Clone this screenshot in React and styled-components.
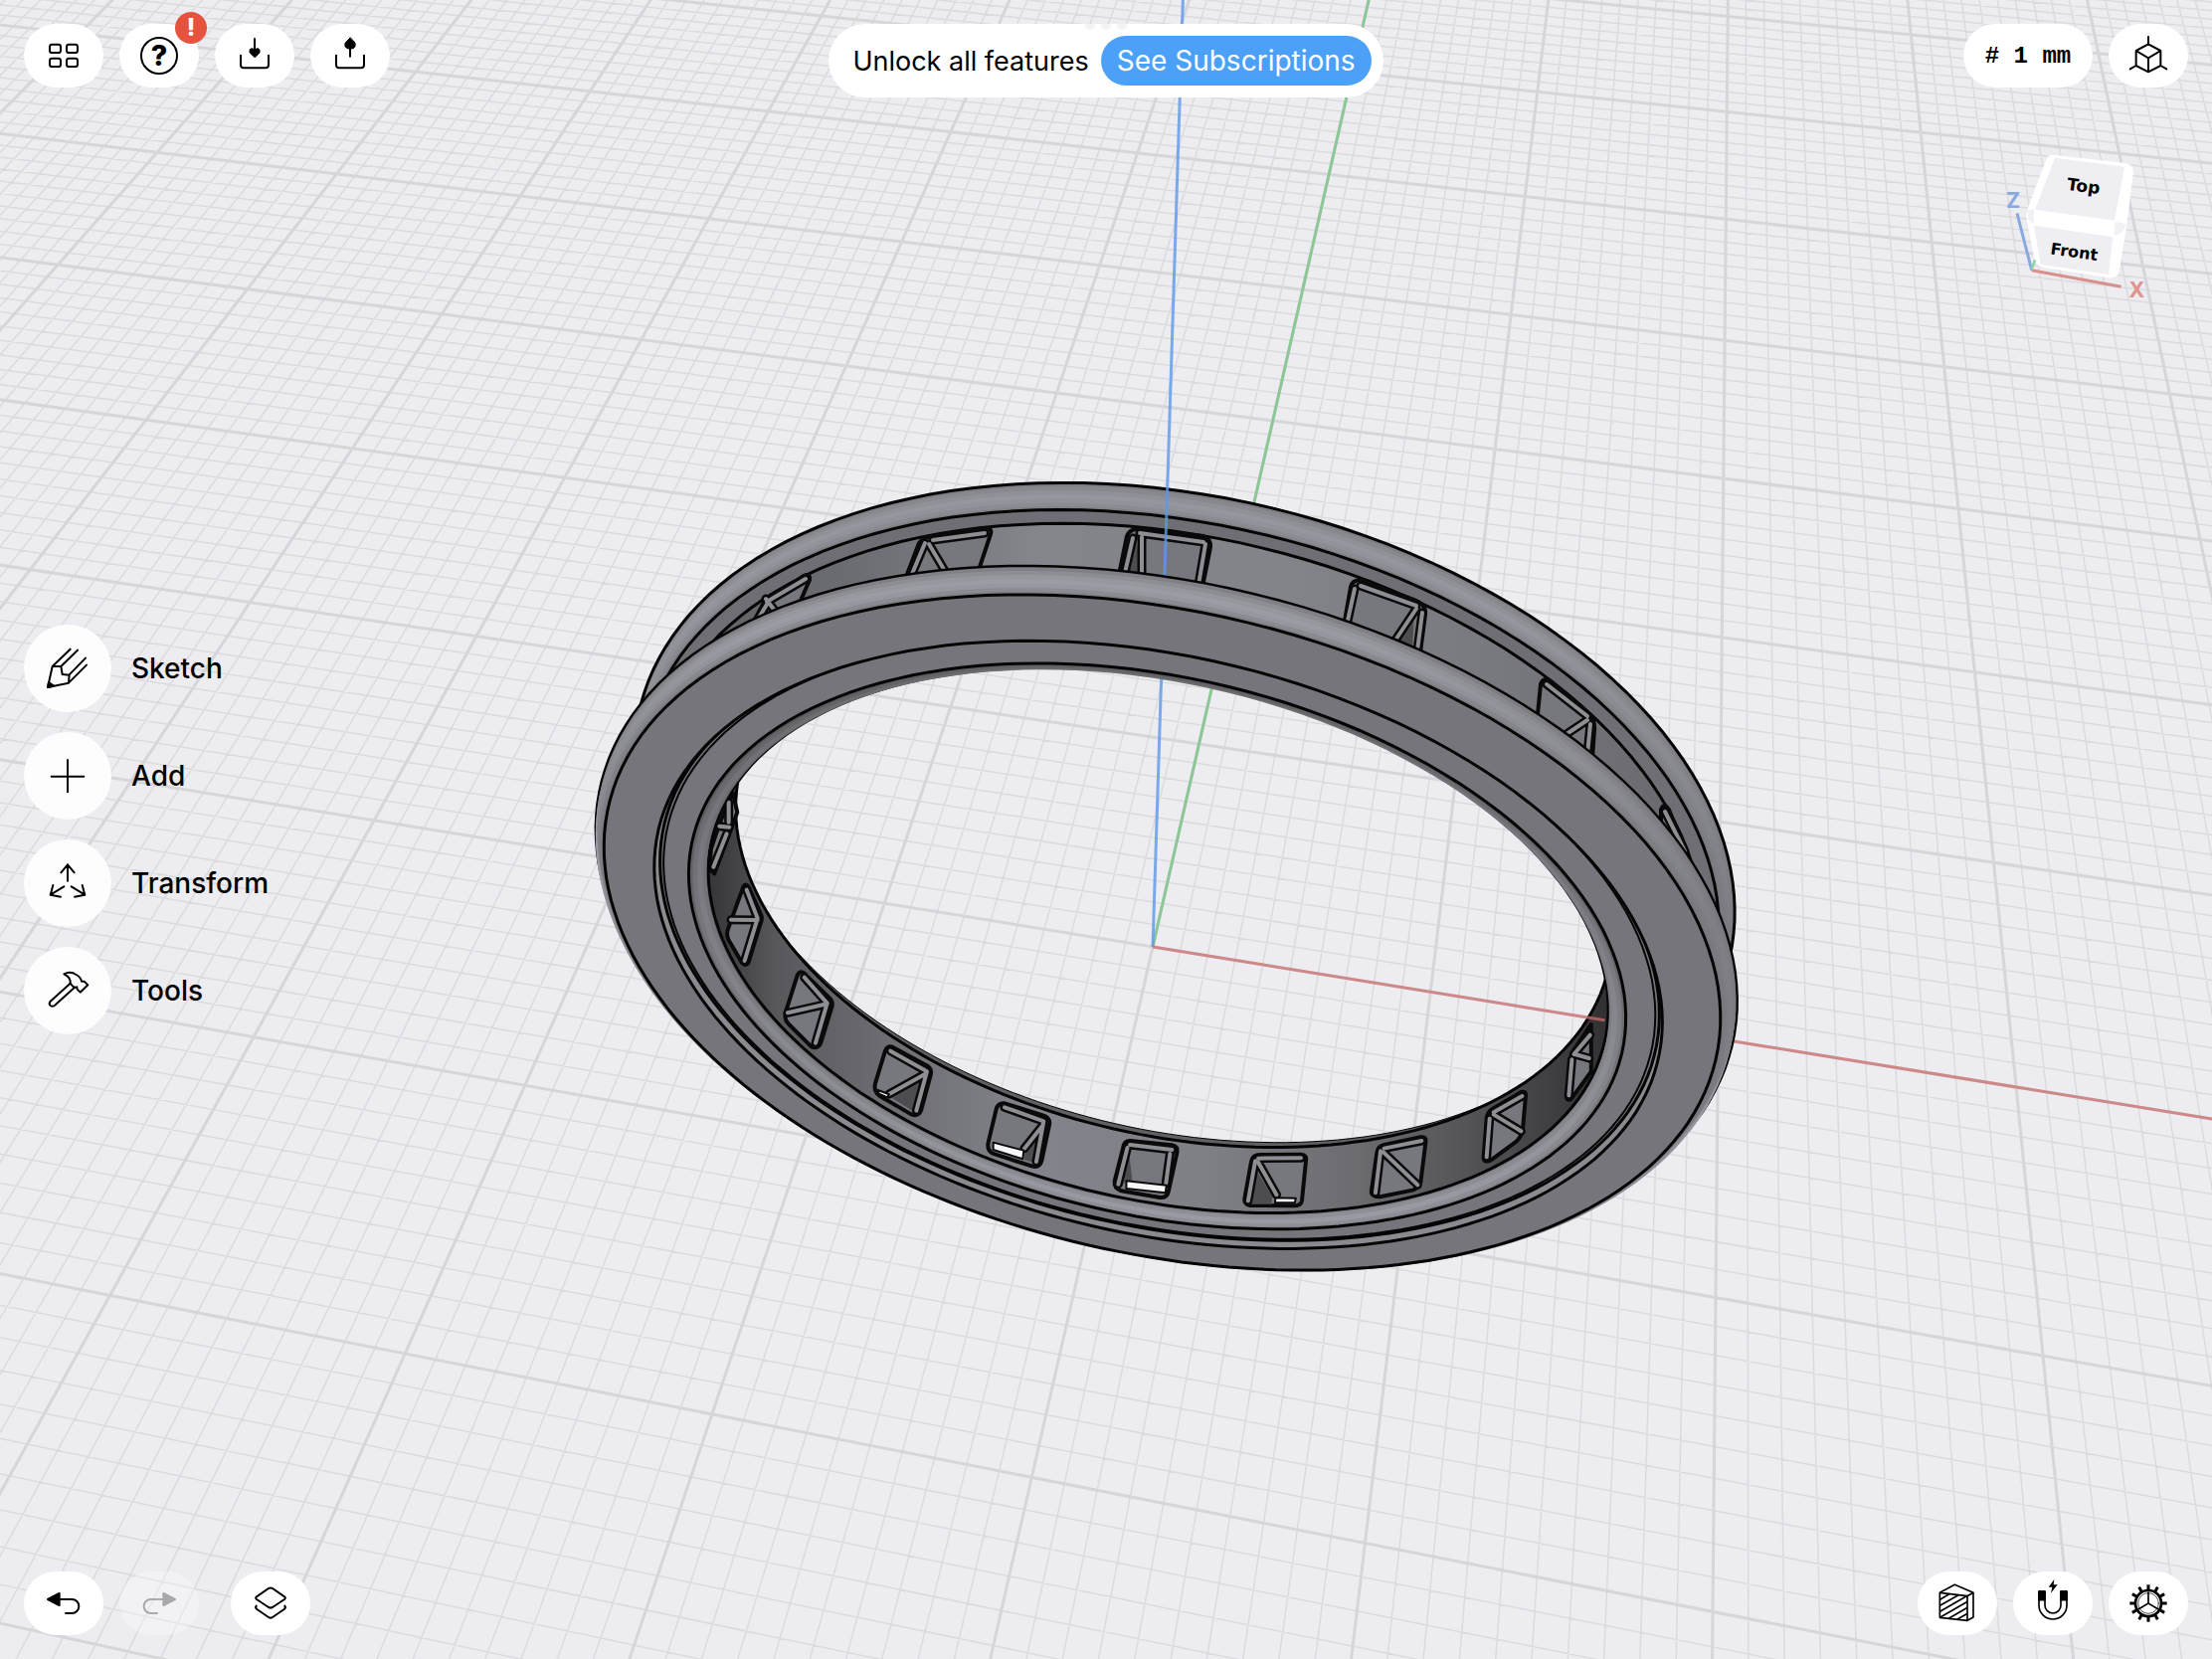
import React, { Component } from 'react';
import styled, { createGlobalStyle } from 'styled-components';

const GlobalStyle = createGlobalStyle`
  * {
    box-sizing: border-box;
  }

  body {
    margin: 0;
    background: #ECECF1;
    font-family: Inter, "Liberation Sans", sans-serif;
    color: #000;
  }

  button {
    border: 0;
    padding: 0;
    background: none;
    color: inherit;
    font: inherit;
    cursor: pointer;
  }
`;

const Page = styled.div`
  position: relative;
  display: flex;
  flex-direction: column;
  min-height: 100vh;
  overflow: hidden;
`;

const Viewport = styled.svg`
  position: absolute;
  inset: 0;
  width: 100%;
  height: 100%;
`;

const Bar = styled.div`
  position: relative;
  display: grid;
  grid-template-columns: 1fr auto 1fr;
  align-items: ${props => props.$align};
  min-height: 98px;
  padding: ${props => (props.$align === 'start' ? '24px 24px 0' : '0 24px 24px')};
`;

const BarGroup = styled.div`
  display: flex;
  gap: 16px;
  grid-column: ${props => (props.$right ? 3 : 1)};
  justify-content: ${props => (props.$right ? 'flex-end' : 'flex-start')};
`;

const Pill = styled.button`
  position: relative;
  display: flex;
  align-items: center;
  justify-content: center;
  width: 80px;
  height: 64px;
  border-radius: 32px;
  background: #FFF;

  &:disabled {
    background: rgba(255, 255, 255, 0.3);
    color: #A9A9AB;
    cursor: default;
  }
`;

const LayersPill = styled(Pill)`
  margin-left: 16px;
`;

const UnitPill = styled(Pill)`
  width: 130px;
  font-family: "Liberation Mono", monospace;
  font-size: 24px;
  font-weight: bold;
`;

const Badge = styled.span`
  position: absolute;
  top: -12px;
  right: -8px;
  width: 32px;
  height: 32px;
  border-radius: 50%;
  background: #E5533F;
  color: #FFF;
  font-size: 24px;
  font-weight: 800;
  line-height: 32px;
  text-align: center;
`;

const Banner = styled.div`
  position: relative;
  display: flex;
  align-items: center;
  grid-column: 2;
  gap: 12px;
  height: 74px;
  padding: 0 12px 0 24px;
  border-radius: 37px;
  background: #FFF;
  overflow: hidden;
  font-size: 27px;
  white-space: nowrap;
`;

const BannerDots = styled.span`
  position: absolute;
  top: -4px;
  left: 50%;
  display: flex;
  gap: 6px;
  transform: translateX(-50%);

  i {
    width: 10px;
    height: 10px;
    border-radius: 50%;
    background: #F2F2F4;
  }
`;

const SubscribeButton = styled.button`
  height: 50px;
  padding: 0 16px;
  border-radius: 25px;
  background: #4AA1F7;
  color: #FFF;
  font-size: 28px;
`;

const Main = styled.main`
  position: relative;
  display: flex;
  flex: 1;
  justify-content: space-between;
  padding: 0 56px 0 24px;
`;

const ToolList = styled.nav`
  display: flex;
  flex-direction: column;
  align-self: center;
  gap: 20px;
`;

const ToolButton = styled.button`
  display: flex;
  align-items: center;
  gap: 20px;
  font-size: 28px;
  font-weight: 500;
`;

const ToolCircle = styled.span`
  display: flex;
  align-items: center;
  justify-content: center;
  width: 88px;
  height: 88px;
  border-radius: 50%;
  background: #FDFDFE;
`;

const IconSvg = styled.svg`
  width: 40px;
  height: 40px;
  overflow: visible;
  fill: none;
  stroke: currentColor;
  stroke-width: ${props => (props.$thin ? 5 : 6)};
  stroke-linecap: round;
  stroke-linejoin: round;

  .solid {
    fill: currentColor;
  }
`;

const OrientationCube = styled.svg`
  width: 160px;
  height: 160px;
  margin-top: 50px;
`;

const Icon = ({ thin, children }) => (
  <IconSvg viewBox="-60 -60 120 120" $thin={thin} aria-hidden="true">{children}</IconSvg>
);

const GridIcon = () => (
  <Icon>
    <rect x="-42" y="-34" width="33" height="25" rx="7" />
    <rect x="9" y="-34" width="33" height="25" rx="7" />
    <rect x="-42" y="8" width="33" height="25" rx="7" />
    <rect x="9" y="8" width="33" height="25" rx="7" />
  </Icon>
);

const HelpIcon = () => (
  <Icon>
    <circle r="54" />
    <text y="31" textAnchor="middle" fontSize="86" fontWeight="800" fill="currentColor" stroke="none">?</text>
  </Icon>
);

const ImportIcon = () => (
  <Icon>
    <path d="M-42,-1 V28 Q-42,37 -33,37 H33 Q42,37 42,28 V-1 M0,-51 V-15" />
    <path className="solid" d="M0,5 L-15,-10 Q-17,-22 -8,-22 L0,-18 L8,-22 Q17,-22 15,-10 Z" strokeWidth="3" />
  </Icon>
);

const ExportIcon = () => (
  <Icon>
    <path d="M-42,-1 V28 Q-42,37 -33,37 H33 Q42,37 42,28 V-1 M0,2 V-30" />
    <path className="solid" d="M0,-54 L-15,-38 Q-18,-26 -9,-22 Q-4,-20 0,-24 Q4,-20 9,-22 Q18,-26 15,-38 Z" strokeWidth="3" />
  </Icon>
);

const ViewIcon = () => (
  <Icon>
    <path d="M0,-35 L37,-15 V30 L0,49 L-37,30 V-15 Z M-37,-15 L0,7 L37,-15 M0,7 V49 M0,-35 V-57 M-37,30 L-55,40 M37,30 L55,40" />
  </Icon>
);

const SketchIcon = () => (
  <Icon>
    <path d="M8,-58 L-46,-6 L-60,57 L3,44 L57,-10 M30,-55 L-20,-6 L-16,18 L5,20 L3,44 M54,-31 L5,19 M-46,-6 H-20" />
    <path className="solid" d="M-60,57 L-57,42 L-42,53 Z" />
  </Icon>
);

const AddIcon = () => <Icon><path d="M-49,2 H49 M0,-48 V49" /></Icon>;

const TransformIcon = () => (
  <Icon>
    <path d="M0,-7 V-56 M-20,-32 L0,-56 L20,-32 M-11,10 L-52,35 M-44,6 L-52,35 L-21,41 M11,10 L52,35 M44,6 L52,35 L21,41" />
  </Icon>
);

const ToolsIcon = () => (
  <Icon>
    <path d="M8,-22 L-52,32 Q-58,40 -52,45 Q-44,50 -37,43 L21,-10" />
    <path d="M-11,-50 Q8,-60 26,-48 Q40,-40 42,-28 L50,-28 L61,-17 L38,5 L29,-4 L28,-11 Q20,-8 15,-14 L8,-22 Q10,-40 -11,-50 Z" />
  </Icon>
);

const UndoIcon = () => (
  <Icon>
    <path d="M-10,-12 H25 A21,21 0 0 1 25,30 H6" />
    <path className="solid" d="M-48,-12 L-13,-30 V6 Z" />
  </Icon>
);

const RedoIcon = () => (
  <Icon>
    <path d="M10,-12 H-25 A21,21 0 0 0 -25,30 H-6" />
    <path className="solid" d="M48,-12 L13,-30 V6 Z" />
  </Icon>
);

const LayersIcon = () => (
  <Icon>
    <path d="M-6,-45 Q0,-48 6,-45 L42,-20 Q47,-16 42,-12 L6,12 Q0,15 -6,12 L-42,-12 Q-47,-16 -42,-20 Z" />
    <path d="M-43,8 Q-47,14 -41,18 L-6,42 Q0,46 6,42 L41,18 Q47,14 43,8" />
  </Icon>
);

const SectionIcon = () => (
  <Icon thin>
    <path d="M-53,-32 L30,-22 V52 L-53,43 Z M-53,-32 L-8,-56 L48,-32 L30,-22 M48,-32 V42 L30,52" />
    <path d="M-51,-12 L-25,-28 M-51,6 L3,-25 M-51,24 L28,-22 M-50,41 L28,-4 M-25,45 L28,14 M0,48 L28,32" />
  </Icon>
);

const MagnetIcon = () => (
  <Icon thin>
    <path d="M-42,-36 V6 A42,42 0 0 0 42,6 V-36 H24 V6 A24,24 0 0 1 -24,6 V-36 Z" />
    <path className="solid" d="M-42,-36 H-24 V-10 H-42 Z M42,-36 H24 V-10 H42 Z" />
    <path className="solid" d="M4,-72 L-13,-49 L-2,-49 L-6,-31 L14,-56 L2,-56 Z" stroke="none" />
  </Icon>
);

const GearIcon = () => (
  <Icon thin>
    <circle r="39" strokeWidth="8" />
    <circle r="31" strokeWidth="2" />
    <path d="M0,-33 V0 L-29,17 M0,0 L29,17" />
    {Array.from({ length: 12 }, (_, i) => (
      <path key={i} d="M0,-42 V-56" strokeWidth="9" strokeLinecap="butt" transform={`rotate(${i * 30})`} />
    ))}
  </Icon>
);

// Camera: one grid unit is 10 mm, columns are the x, y and z axes plus the origin.
const project = (x, y, z) => {
  const depth = 1 - 0.0172 * x + 0.085 * y - 0.1073 * z;
  return [
    (1159 + 254.5 * x + 149 * y - 119.2 * z) / depth,
    (952 + 28.2 * x - 140.4 * y - 264.1 * z) / depth,
  ];
};

const point = ([x, y]) => `${x.toFixed(1)},${y.toFixed(1)}`;

const segment = (a, b) => `M${point(project(...a))} L${point(project(...b))}`;

const gridLines = (major) => {
  const lines = [];
  for (let i = -120; i <= 100; i += 1) {
    if ((i % 10 === 0) === major) {
      if (i <= 80) lines.push(segment([i / 10, -4, 0], [i / 10, 10, 0]));
      if (i >= -40) lines.push(segment([-12, i / 10, 0], [8, i / 10, 0]));
    }
  }
  return lines.join(' ');
};

// Circle around the y axis with radius r, at distance y from the origin.
const circle = (r, y) => {
  const points = [];
  for (let i = 0; i < 180; i += 1) {
    const angle = (i * Math.PI) / 90;
    points.push(point(project(r * Math.cos(angle), y, r * Math.sin(angle))));
  }
  return `M${points.join(' L')} Z`;
};

const EVERYTHING = 'M0,0 H2224 V1668 H0 Z';
const BORE = circle(1.6, -0.165);
const FACE = circle(1.957, -0.232);

const fillet = (from, to, shades) => shades.map((shade, i) => {
  const angle = (i / shades.length) * (Math.PI / 2);
  return {
    shade,
    r: to[0] + (from[0] - to[0]) * Math.cos(angle),
    y: from[1] + (to[1] - from[1]) * Math.sin(angle),
  };
});

const BACK_RIM = fillet([2, 0.2], [1.95, 0.138], ['#7E7E84', '#88898F', '#909197', '#96979E', '#92939A', '#8B8C92', '#808187']);
const FRONT_RIM = fillet([2.005, -0.17], [1.957, -0.232], ['#808086', '#8D8E94', '#97989E', '#9C9DA4', '#97989F', '#8B8C92', '#7F8086']);
const INNER_RIM = [
  { r: 1.603, y: -0.177, shade: 'url(#innerMid)' },
  { r: 1.612, y: -0.188, shade: 'url(#innerLight)' },
  { r: 1.63, y: -0.198, shade: 'url(#innerMid)' },
  { r: 1.645, y: -0.203, shade: 'url(#innerDark)' },
];

const LEFT_POCKETS = [
  {
    outline: 'M470,110 L484,170 L468,213 L415,355 L400,342 L405,280 L430,205 Z',
    beams: 'M458,140 V200 M430,212 L460,215 M452,235 L412,335',
  },
  {
    outline: 'M502,395 Q510,382 518,396 L556,480 Q560,492 555,502 L517,625 Q508,636 498,624 L458,556 Q450,540 456,522 Z',
    beams: 'M512,404 L545,490 L506,618 M465,494 L545,495',
  },
  {
    outline: 'M665,662 Q672,646 686,656 L762,730 Q774,742 769,758 L735,868 Q728,884 708,878 L640,810 Q624,796 630,772 Z',
    beams: 'M686,668 L755,746 L720,866 M636,775 L755,748',
  },
  {
    outline: 'M930,890 Q936,872 952,878 L1052,932 Q1073,942 1067,964 L1038,1070 Q1031,1088 1010,1082 L914,1026 Q894,1012 900,988 Z',
    dark: 'M1048,972 L1018,1074 L950,1032 Z',
    light: 'M908,1008 L942,1021 L936,1030 L910,1018 Z',
    beams: 'M946,890 L1056,952 L1024,1070 M942,1020 L1054,958',
  },
  {
    outline: 'M1265,1066 Q1270,1046 1290,1048 L1406,1084 Q1430,1092 1425,1114 L1402,1222 Q1396,1243 1374,1238 L1256,1200 Q1236,1190 1241,1166 Z',
    dark: 'M1400,1130 L1378,1226 L1350,1218 L1352,1190 Z',
    light: 'M1256,1166 L1348,1190 L1345,1216 L1256,1188 Z',
    beams: 'M1290,1060 L1408,1102 L1386,1224 M1350,1184 L1406,1114',
  },
];

const RIGHT_POCKETS = [
  {
    outline: 'M332,460 Q334,440 346,441 L428,454 Q440,458 438,476 L421,594 Q418,614 404,612 L328,592 Q313,584 315,562 Z',
    dark: 'M343,476 L350,560 L338,562 L324,584 Z',
    light: 'M338,562 L417,575 L415,598 L338,585 Z',
    beams: 'M345,453 L428,468 M340,462 L322,572 M424,480 L416,570',
  },
  {
    outline: 'M584,505 Q586,484 600,483 L682,482 Q694,484 692,500 L684,622 Q682,637 668,637 L582,636 Q570,632 571,616 Z',
    dark: 'M592,524 L626,610 L624,632 L584,632 Z',
    light: 'M632,613 L672,614 L670,628 L631,628 Z',
    beams: 'M598,494 L682,493 M592,502 L578,622 M598,506 L634,604',
  },
  {
    outline: 'M832,476 Q834,458 845,454 L918,430 Q930,428 928,444 L918,566 Q914,584 902,590 L838,610 Q820,610 821,592 Z',
    beams: 'M846,464 L920,441 M839,472 L829,598 M845,476 L912,574',
  },
  {
    outline: 'M1048,372 Q1050,352 1060,344 L1116,294 Q1126,290 1125,304 L1119,410 Q1116,430 1106,444 L1056,500 Q1042,508 1042,492 Z',
    beams: 'M1062,355 L1118,306 M1054,374 L1048,490 M1062,362 L1116,412',
  },
  {
    outline: 'M1215,178 L1254,90 L1254,232 L1214,316 Q1205,322 1205,306 Z',
    beams: 'M1220,180 L1252,122 M1216,196 L1210,304 M1222,180 L1250,192',
  },
];

const OUTER_POCKETS = [
  { outline: 'M754,632 L768,606 L808,579 Q815,576 814,583 L804,606', beams: 'M771,605 L810,582 M772,606 L760,626 M770,602 L782,618' },
  { outline: 'M911,580 L924,546 Q928,540 938,539 L990,531 Q998,531 996,537 L984,573', beams: 'M938,543 L990,536 M930,546 L917,577 M934,547 L950,574' },
  { outline: 'M1125,578 L1133,539 Q1136,531 1146,532 L1210,539 Q1218,542 1217,550 L1209,590', dark: 'M1142,542 L1148,578 L1134,578 Z', beams: 'M1146,536 L1210,545 M1139,541 L1131,576 M1148,540 V578 M1212,547 L1205,588' },
  { outline: 'M1352,624 L1358,590 Q1360,582 1370,584 L1424,604 Q1434,608 1433,618 L1428,656', dark: 'M1422,614 L1420,654 L1406,646 Z', beams: 'M1368,589 L1424,609 M1362,592 L1355,624 M1424,612 L1404,642 M1430,616 L1425,654' },
  { outline: 'M1546,718 L1549,688 Q1551,681 1558,684 L1596,716 Q1604,722 1603,734 L1601,762', beams: 'M1555,688 L1596,720 M1596,724 L1572,740 M1599,728 L1596,758' },
  { outline: 'M1670,834 V814 Q1673,806 1678,814 L1702,876', beams: 'M1674,816 L1694,856' },
];

const Pocket = ({ outline, dark, light, beams }) => (
  <g strokeLinejoin="round" strokeLinecap="round">
    <path d={outline} fill="#77787E" stroke="#0A0A0B" strokeWidth="4" vectorEffect="non-scaling-stroke" />
    {dark && <path d={dark} fill="#4C4C51" />}
    <path d={beams} fill="none" stroke="#0A0A0B" strokeWidth="9" vectorEffect="non-scaling-stroke" />
    <path d={beams} fill="none" stroke="#8E8F95" strokeWidth="4" vectorEffect="non-scaling-stroke" />
    {light && <path d={light} fill="#F6F6F8" stroke="#0A0A0B" strokeWidth="2" vectorEffect="non-scaling-stroke" />}
  </g>
);

const Shade = ({ id, vertical, from, to, stops }) => (
  <linearGradient
    id={id}
    gradientUnits="userSpaceOnUse"
    x1={vertical ? 0 : from}
    x2={vertical ? 0 : to}
    y1={vertical ? from : 0}
    y2={vertical ? to : 0}
  >
    {stops.map(([offset, color, opacity]) => (
      <stop key={offset} offset={offset} stopColor={color} stopOpacity={opacity === undefined ? 1 : opacity} />
    ))}
  </linearGradient>
);

const Edge = ({ r, y, width = 3 }) => (
  <path d={circle(r, y)} fill="none" stroke="#050506" strokeWidth={width} />
);

const RingBack = () => (
  <g>
    <g clipPath="url(#outsideBore)">
      <path d={circle(1.96, 0.245)} fill="#6A6A70" stroke="#6A6A70" strokeWidth="2" />
      {BACK_RIM.map(({ r, y, shade }) => <path key={shade} d={circle(r, y)} fill={shade} />)}
      <path d={circle(2, 0.2)} fill="url(#rimShadow)" />
      <Edge r={2} y={0.2} />
      <path d={circle(1.95, 0.138)} fill="#6E6E74" />
      <Edge r={1.95} y={0.138} />
      <path d={circle(1.897, 0.138)} fill="url(#channel)" />
      <Edge r={1.897} y={0.138} />
      {OUTER_POCKETS.map(pocket => <Pocket key={pocket.outline} {...pocket} />)}
    </g>
    <g clipPath="url(#insideBore)">
      <path d={`${EVERYTHING} ${circle(1.658, 0.21)}`} fillRule="evenodd" fill="#5F5F64" />
      <Edge r={1.658} y={0.21} width={1} />
      <path d={`${EVERYTHING} ${circle(1.6, 0.15)}`} fillRule="evenodd" fill="url(#bore)" />
      <Edge r={1.6} y={0.15} />
      <g transform="translate(580 760) scale(0.3333)">
        {LEFT_POCKETS.map(pocket => <Pocket key={pocket.outline} {...pocket} />)}
      </g>
      <g transform="translate(960 1000) scale(0.5102 0.3333)">
        {RIGHT_POCKETS.map(pocket => <Pocket key={pocket.outline} {...pocket} />)}
      </g>
    </g>
  </g>
);

const RingFront = () => (
  <g>
    <g clipPath="url(#outsideBore)">
      <path d={circle(1.995, -0.158)} fill="none" stroke="#66666B" strokeWidth="2" />
      <Edge r={2.005} y={-0.17} width={5} />
      {FRONT_RIM.map(({ r, y, shade }) => (
        <path key={shade} d={circle(r, y)} fill={shade} />
      ))}
      <path d={circle(2.005, -0.17)} fill="url(#rimShadow)" />
    </g>
    <path d={`${FACE} ${BORE}`} fillRule="evenodd" fill="url(#innerDark)" />
    <Edge r={1.6} y={-0.165} />
    {INNER_RIM.map(({ r, y, shade }) => (
      <path key={r} d={`${FACE} ${circle(r, y)}`} fillRule="evenodd" fill={shade} />
    ))}
    <path d={`${FACE} ${circle(1.658, -0.207)}`} fillRule="evenodd" fill="#76757B" />
    <Edge r={1.658} y={-0.207} />
    <Edge r={1.752} y={-0.2} width={2} />
    <path d={`${FACE} ${circle(1.765, -0.2)}`} fillRule="evenodd" fill="#8A8B91" />
    <Edge r={1.765} y={-0.2} />
    <path d={`${FACE} ${circle(1.775, -0.232)}`} fillRule="evenodd" fill="#76757B" />
    <Edge r={1.775} y={-0.232} />
    <path d={FACE} fill="none" stroke="#050506" strokeWidth="3" />
  </g>
);

const Scene = () => (
  <Viewport viewBox="0 0 2224 1668" preserveAspectRatio="xMidYMid slice" aria-hidden="true">
    <defs>
      <clipPath id="insideBore"><path d={BORE} /></clipPath>
      <clipPath id="outsideBore"><path d={`${EVERYTHING} ${BORE}`} clipRule="evenodd" /></clipPath>
      <Shade
        id="channel"
        from={640}
        to={1740}
        stops={[[0, '#5C5C61'], [0.2, '#6C6D72'], [0.36, '#84858B'], [0.6, '#83848A'], [0.8, '#77787E'], [1, '#646469']]}
      />
      <Shade
        id="bore"
        from={710}
        to={1620}
        stops={[[0, '#353537'], [0.08, '#58585D'], [0.2, '#6C6C72'], [0.36, '#83848B'], [0.55, '#7F8086'], [0.72, '#6B6B70'], [0.86, '#505054'], [1, '#303032']]}
      />
      <Shade id="rimShadow" vertical from={620} to={920} stops={[[0, '#737379', 0], [1, '#737379', 0.7]]} />
      <Shade id="innerDark" vertical from={700} to={1220} stops={[[0, '#57575B'], [0.5, '#66666B'], [1, '#83848A']]} />
      <Shade id="innerMid" vertical from={700} to={1220} stops={[[0, '#626267'], [0.5, '#78797E'], [1, '#8F9097']]} />
      <Shade id="innerLight" vertical from={700} to={1220} stops={[[0, '#6C6C71'], [0.5, '#808086'], [1, '#9A9BA2']]} />
    </defs>
    <path d={EVERYTHING} fill="#ECECF1" />
    <path d={gridLines(false)} stroke="#DBDBDF" strokeWidth="1.5" />
    <path d={gridLines(true)} stroke="#D6D6DA" strokeWidth="3" />
    <path d={segment([0, 0, 0], [0, 8, 0])} stroke="#8CC896" strokeWidth="3" />
    <RingBack />
    <path d={segment([0, 0, 0], [0, 0, 3.8])} stroke="#5C98E8" strokeOpacity="0.8" strokeWidth="3" />
    <path d={segment([0, 0, 0], [1.61, 0, 0])} stroke="#C96E6B" strokeOpacity="0.75" strokeWidth="3" />
    <path d={segment([1.9, 0, 0], [5, 0, 0])} stroke="#C96E6B" strokeOpacity="0.75" strokeWidth="3" />
    <RingFront />
  </Viewport>
);

const Cube = () => (
  <OrientationCube viewBox="204 444 480 480" role="img" aria-label="View orientation">
    <path d="M308,815 L578,865" stroke="#D98F8B" strokeWidth="9" />
    <path d="M264,643 L308,815" stroke="#86AADF" strokeWidth="9" />
    <path d="M372,467 L592,492 Q618,498 614,526 L593,692 L572,820 Q566,842 540,838 L340,806 Q320,800 316,782 L293,660 Q290,640 300,618 L350,486 Q356,466 372,467 Z" fill="#FFF" />
    <path d="M378,476 L588,503 L558,665 L318,632 Z" fill="#EFEFF3" />
    <path d="M315,680 L553,715 L540,828 L335,798 Z" fill="#EFEFF3" />
    <path d="M296,632 L316,632 L314,676 L298,664 Z M560,668 L592,676 Q590,702 556,712 Z" fill="#F1F1F5" />
    <path d="M308,812 L318,784" stroke="#8FD3A5" strokeWidth="8" />
    <g fontFamily="DejaVu Sans, sans-serif" fontWeight="bold" textAnchor="middle">
      <text x="462" y="579" fontSize="51" transform="rotate(8 462 579)">Top</text>
      <text x="434" y="776" fontSize="48" transform="rotate(8 434 776)">Front</text>
    </g>
    <g fontFamily="Inter, sans-serif" fontWeight="bold" fontSize="64" textAnchor="middle">
      <text x="252" y="626" fill="#86AADF">Z</text>
      <text x="625" y="896" fill="#DE938F">X</text>
    </g>
  </OrientationCube>
);

const TOOLS = [
  { label: 'Sketch', icon: <SketchIcon /> },
  { label: 'Add', icon: <AddIcon /> },
  { label: 'Transform', icon: <TransformIcon /> },
  { label: 'Tools', icon: <ToolsIcon /> },
];

class App extends Component {
  render() {
    return (
      <Page>
        <GlobalStyle />
        <Scene />
        <Bar as="header" $align="start">
          <BarGroup>
            <Pill aria-label="Designs"><GridIcon /></Pill>
            <Pill aria-label="Help">
              <HelpIcon />
              <Badge>!</Badge>
            </Pill>
            <Pill aria-label="Import"><ImportIcon /></Pill>
            <Pill aria-label="Export"><ExportIcon /></Pill>
          </BarGroup>
          <Banner>
            <BannerDots><i /><i /><i /></BannerDots>
            <span>Unlock all features</span>
            <SubscribeButton>See Subscriptions</SubscribeButton>
          </Banner>
          <BarGroup $right>
            <UnitPill># 1 mm</UnitPill>
            <Pill aria-label="Views"><ViewIcon /></Pill>
          </BarGroup>
        </Bar>
        <Main>
          <ToolList>
            {TOOLS.map(({ label, icon }) => (
              <ToolButton key={label}>
                <ToolCircle>{icon}</ToolCircle>
                {label}
              </ToolButton>
            ))}
          </ToolList>
          <Cube />
        </Main>
        <Bar as="footer" $align="end">
          <BarGroup>
            <Pill aria-label="Undo"><UndoIcon /></Pill>
            <Pill aria-label="Redo" disabled><RedoIcon /></Pill>
            <LayersPill aria-label="Items"><LayersIcon /></LayersPill>
          </BarGroup>
          <BarGroup $right>
            <Pill aria-label="Section view"><SectionIcon /></Pill>
            <Pill aria-label="Snapping"><MagnetIcon /></Pill>
            <Pill aria-label="Settings"><GearIcon /></Pill>
          </BarGroup>
        </Bar>
      </Page>
    );
  }
}

export default App;
